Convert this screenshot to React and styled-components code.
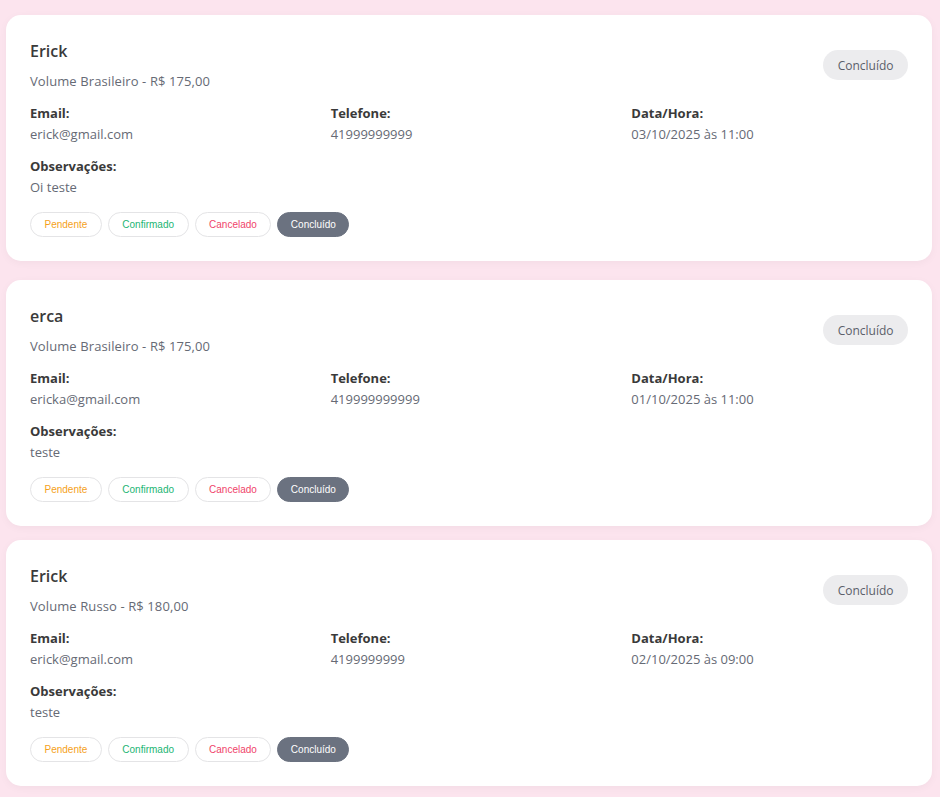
import React from "react";
import styled, { createGlobalStyle } from "styled-components";

const Global = createGlobalStyle`
  html, body { margin: 0; padding: 0; background: #fce4ee; }
  body { font-family: "Open Sans", "Noto Sans", sans-serif; }
  * { box-sizing: border-box; }
`;

const Page = styled.main`
  display: flex;
  flex-direction: column;
  gap: 14px;
  padding: 15px 8px 15px 6px;
  background: #fce4ee;
  min-height: 797px;
`;

const Card = styled.section`
  background: #fff;
  border-radius: 15px;
  padding: 24px;
  box-shadow: 0 2px 8px rgba(0, 0, 0, 0.04);
  margin-top: ${(p) => (p.$extra ? "5px" : "0")};
`;

const Header = styled.header`
  display: flex;
  align-items: center;
  justify-content: space-between;
`;

const TitleBlock = styled.div`
  display: flex;
  flex-direction: column;
  gap: 8px;
`;

const Name = styled.h3`
  margin: 0;
  font-size: 16px;
  line-height: 24px;
  font-weight: 600;
  color: #3a3a3a;
`;

const Service = styled.p`
  margin: 0;
  font-size: 13px;
  line-height: 20px;
  letter-spacing: 0.1px;
  color: #666a75;
`;

const StatusBadge = styled.span`
  display: inline-flex;
  align-items: center;
  height: 30px;
  padding: 0 14.5px;
  border-radius: 15px;
  background: #ececee;
  color: #5b5f6a;
  font-size: 12px;
`;

const Grid = styled.div`
  display: grid;
  grid-template-columns: repeat(3, 1fr);
  column-gap: 24px;
  margin-top: 12px;
`;

const Field = styled.div`
  display: flex;
  flex-direction: column;
  margin-top: ${(p) => (p.$spaced ? "12px" : "0")};
`;

const Label = styled.span`
  font-size: 13px;
  line-height: 21px;
  font-weight: 700;
  color: #3a3a3a;
`;

const Value = styled.span`
  font-size: 13px;
  line-height: 20px;
  color: #666a75;
`;

const Actions = styled.div`
  display: flex;
  gap: 6px;
  margin-top: 15px;
`;

const tones = {
  pending: "#f5a11a",
  confirmed: "#22b573",
  cancelled: "#f0446a",
};

const ActionButton = styled.button`
  height: 25px;
  padding: 0 ${(p) => (p.$active ? "12.5px" : "13.5px")};
  border-radius: 13px;
  font-family: "Liberation Sans", Arial, sans-serif;
  font-size: 10px;
  cursor: pointer;
  border: 1px solid ${(p) => (p.$active ? "#6b7280" : "#e4e4e6")};
  background: ${(p) => (p.$active ? "#6b7280" : "#fff")};
  color: ${(p) => (p.$active ? "#fff" : tones[p.$tone])};
`;

const bookings = [
  {
    name: "Erick",
    service: "Volume Brasileiro - R$ 175,00",
    email: "erick@gmail.com",
    phone: "41999999999",
    date: "03/10/2025 às 11:00",
    notes: "Oi teste",
  },
  {
    name: "erca",
    service: "Volume Brasileiro - R$ 175,00",
    email: "ericka@gmail.com",
    phone: "419999999999",
    date: "01/10/2025 às 11:00",
    notes: "teste",
  },
  {
    name: "Erick",
    service: "Volume Russo - R$ 180,00",
    email: "erick@gmail.com",
    phone: "4199999999",
    date: "02/10/2025 às 09:00",
    notes: "teste",
  },
];

function BookingCard({ b, extra }) {
  return (
    <Card $extra={extra}>
      <Header>
        <TitleBlock>
          <Name>{b.name}</Name>
          <Service>{b.service}</Service>
        </TitleBlock>
        <StatusBadge>Concluído</StatusBadge>
      </Header>
      <Grid>
        <Field>
          <Label>Email:</Label>
          <Value>{b.email}</Value>
        </Field>
        <Field>
          <Label>Telefone:</Label>
          <Value>{b.phone}</Value>
        </Field>
        <Field>
          <Label>Data/Hora:</Label>
          <Value>{b.date}</Value>
        </Field>
      </Grid>
      <Field $spaced>
        <Label>Observações:</Label>
        <Value>{b.notes}</Value>
      </Field>
      <Actions>
        <ActionButton $tone="pending">Pendente</ActionButton>
        <ActionButton $tone="confirmed">Confirmado</ActionButton>
        <ActionButton $tone="cancelled">Cancelado</ActionButton>
        <ActionButton $active>Concluído</ActionButton>
      </Actions>
    </Card>
  );
}

export default function App() {
  return (
    <>
      <Global />
      <Page>
        {bookings.map((b, i) => (
          <BookingCard key={i} b={b} extra={i === 1} />
        ))}
      </Page>
    </>
  );
}
